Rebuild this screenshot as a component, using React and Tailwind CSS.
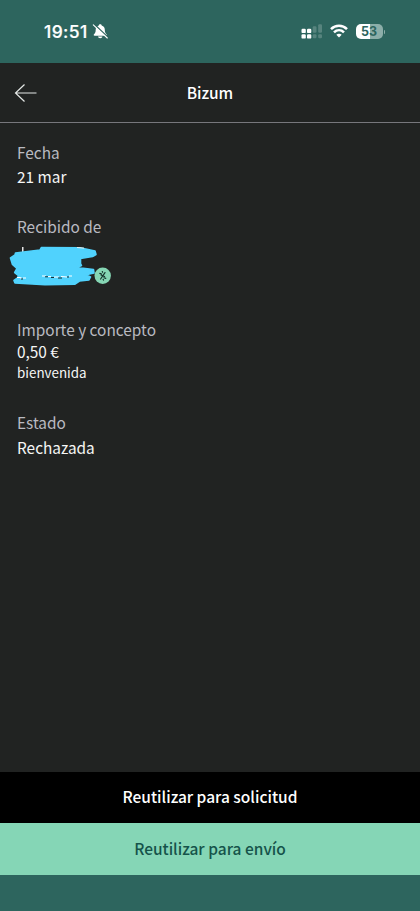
function StatusBar() {
  return (
    <div className="flex h-[63px] shrink-0 items-start bg-[#2d655e] pl-11 pr-[35px] pt-[21px] text-white">
      <span className="w-[45px] whitespace-nowrap font-['Inter',sans-serif] text-[17.500px] font-medium leading-[22px] tracking-[0.400px] [-webkit-text-stroke:0.2px_white]">19:51</span>
      <svg className="ml-[3px] mt-[2px]" width="17" height="17" viewBox="0 0 17 17">
        <path d="M8.2 1.3c.8 0 1.4.5 1.5 1.2 2 .6 3.1 2.200 3.1 4.300 0 2.600.6 3.500 1.700 4.500.6.6.3 1.500-.6 1.500H2.600c-.9 0-1.200-.9-.6-1.500 1.100-1 1.700-1.900 1.700-4.500 0-2.100 1.100-3.700 3.100-4.300.1-.7.6-1.200 1.400-1.200z" fill="#fff" />
        <path d="M6 13.600h4.400c-.2 1-1 1.700-2.200 1.700s-2-.7-2.200-1.700z" fill="#fff" />
        <path d="M2.300 1.300L16 14.300" stroke="#2d655e" strokeWidth="1.300" />
        <path d="M1.300 1.800L15.300 15" stroke="#fff" strokeWidth="1.100" strokeLinecap="round" />
      </svg>
      <div className="ml-auto flex items-start">
        <svg className="mt-[2px]" width="22" height="17" viewBox="0 0 22 17">
          <g fill="#fff">
            <rect x="0.500" y="5.800" width="4.300" height="4.300" rx="1.200" />
            <rect x="0.500" y="11.300" width="4.300" height="4.300" rx="1.200" />
            <rect x="6" y="5.800" width="4.300" height="4.300" rx="1.200" />
            <rect x="6" y="11.300" width="4.300" height="4.300" rx="1.200" />
          </g>
          <g fill="#fff" opacity=".2">
            <rect x="11.700" y="3.300" width="3.800" height="6.500" rx="1.200" />
            <rect x="11.700" y="11.300" width="3.800" height="4" rx="1.200" />
            <rect x="17.200" y="1.300" width="3.800" height="8.500" rx="1.200" />
            <rect x="17.200" y="11.300" width="3.800" height="4" rx="1.200" />
          </g>
        </svg>
        <svg className="ml-[7px] mt-[3px]" width="18" height="14" viewBox="0 0 18 14">
          <g fill="none" stroke="#fff" strokeWidth="2.500">
            <path d="M1 5.200C5.500.7 12.500.7 17 5.200" />
            <path d="M4 8.300c2.900-2.800 7.100-2.800 10 0" />
          </g>
          <path d="M9 13.500L6.300 10.800c1.500-1.400 3.900-1.400 5.400 0z" fill="#fff" />
        </svg>
        <div className="ml-2 mt-[3px] flex items-center">
          <div className="flex h-[15px] w-[27px] items-center justify-center rounded-[5px] bg-linear-to-r from-white from-52% to-[#8caea9] to-52% font-['Inter',sans-serif] text-[12.500px] font-bold leading-[15px] text-[#2d655e]">
            53
          </div>
          <div className="ml-px h-[4px] w-[1.5px] rounded-r-full bg-[#8caea9]" />
        </div>
      </div>
    </div>
  );
}

function Header() {
  return (
    <header className="grid h-[60px] shrink-0 grid-cols-[60px_1fr_60px] items-center border-b border-[#77777c] bg-[#212322]">
      <svg className="ml-[14px]" width="24" height="20" viewBox="0 0 24 20" fill="none" stroke="#e4e8e6" strokeWidth="1.200">
        <path d="M1.500 10H22.500M10.500 1.500L1.500 10l9 8.500" />
      </svg>
      <h1 className="pb-[2px] text-center text-[15.500px] font-medium leading-6 text-white">Bizum</h1>
    </header>
  );
}

function Label({ children }) {
  return <dt className="text-[15.400px] leading-6 text-[#b9bac1]">{children}</dt>;
}

function HiddenSender() {
  return (
    <svg width="115" height="50" viewBox="0 0 115 50">
      <rect x="22" y="9" width="1.500" height="8" fill="#e5e5e5" />
      <path
        d="M10.500 20L15 17L15.500 15L40 12L41.500 9.500L80 9.800L95 13L96 16.500L92.500 18.500L80.500 20.500L80.500 25.500L81.500 27.500L77 29.500L93.500 31.500L94 35L86 36.700L90.500 39L89 42L79.500 43L75 46.200L45 46.700L15 45L14 42.500L17.500 40L18.500 37.500L14.700 34.500L17 30.500L12.500 26.500Z"
        fill="#50d2fd"
        stroke="#50d2fd"
        strokeWidth="1.600"
        strokeLinejoin="round"
      />
      <path d="M77 9.500l7 .6" stroke="#eee" strokeWidth="1" />
      <path d="M17 39.500h3l2 1M23 40h3M42 38h4M48 38.500h3M54 39h5M61 38.500l6 .5M69 38h3" stroke="#fff" strokeWidth="1.200" fill="none" />
      <path d="M21 41h2M45 38.800h3M51 39.500h3M58 40h4M67 39h2" stroke="#162c33" strokeWidth="1" />
      <circle cx="102.700" cy="37.800" r="8.200" fill="#85d6b4" />
      <g stroke="#17352d" strokeWidth="1.200" strokeLinecap="round" strokeLinejoin="round" fill="none">
        <path d="M99.800 35.400L101.600 36M105 34.600L100.600 41M104 39.700L105.800 40.400M101 37l3.600 1.500" />
        <path d="M102.300 33.600l.3.700M103.200 41.400l.3.700" />
      </g>
    </svg>
  );
}

export default function App() {
  return (
    <div className="flex h-[911px] w-[420px] flex-col overflow-hidden bg-[#2d655e] font-['Noto_Sans_CJK_SC',sans-serif]">
      <StatusBar />
      <Header />
      <dl className="flex-1 bg-[#212322] px-[17px] pt-[17px] text-[15.400px] leading-6 text-[#f5f6f5]">
        <Label>Fecha</Label>
        <dd className="mb-[26px]">21 mar</dd>
        <Label>Recibido de</Label>
        <dd className="-ml-[17px] mb-[29px] h-[50px]">
          <HiddenSender />
        </dd>
        <Label>Importe y concepto</Label>
        <dd className="mb-[27px]">
          <p className="text-[15.400px] leading-5">0,50 €</p>
          <p className="text-[13.400px] leading-[22px]">bienvenida</p>
        </dd>
        <Label>Estado</Label>
        <dd className="pt-px">Rechazada</dd>
      </dl>
      <button className="h-[51px] shrink-0 bg-black pb-[3px] text-[15.500px] font-medium leading-6 text-white">Reutilizar para solicitud</button>
      <button className="h-[52px] shrink-0 bg-[#85d6b6] pb-[3px] text-[15.500px] font-medium leading-6 text-[#15534a]">Reutilizar para envío</button>
      <div className="h-[36px] shrink-0" />
    </div>
  );
}
